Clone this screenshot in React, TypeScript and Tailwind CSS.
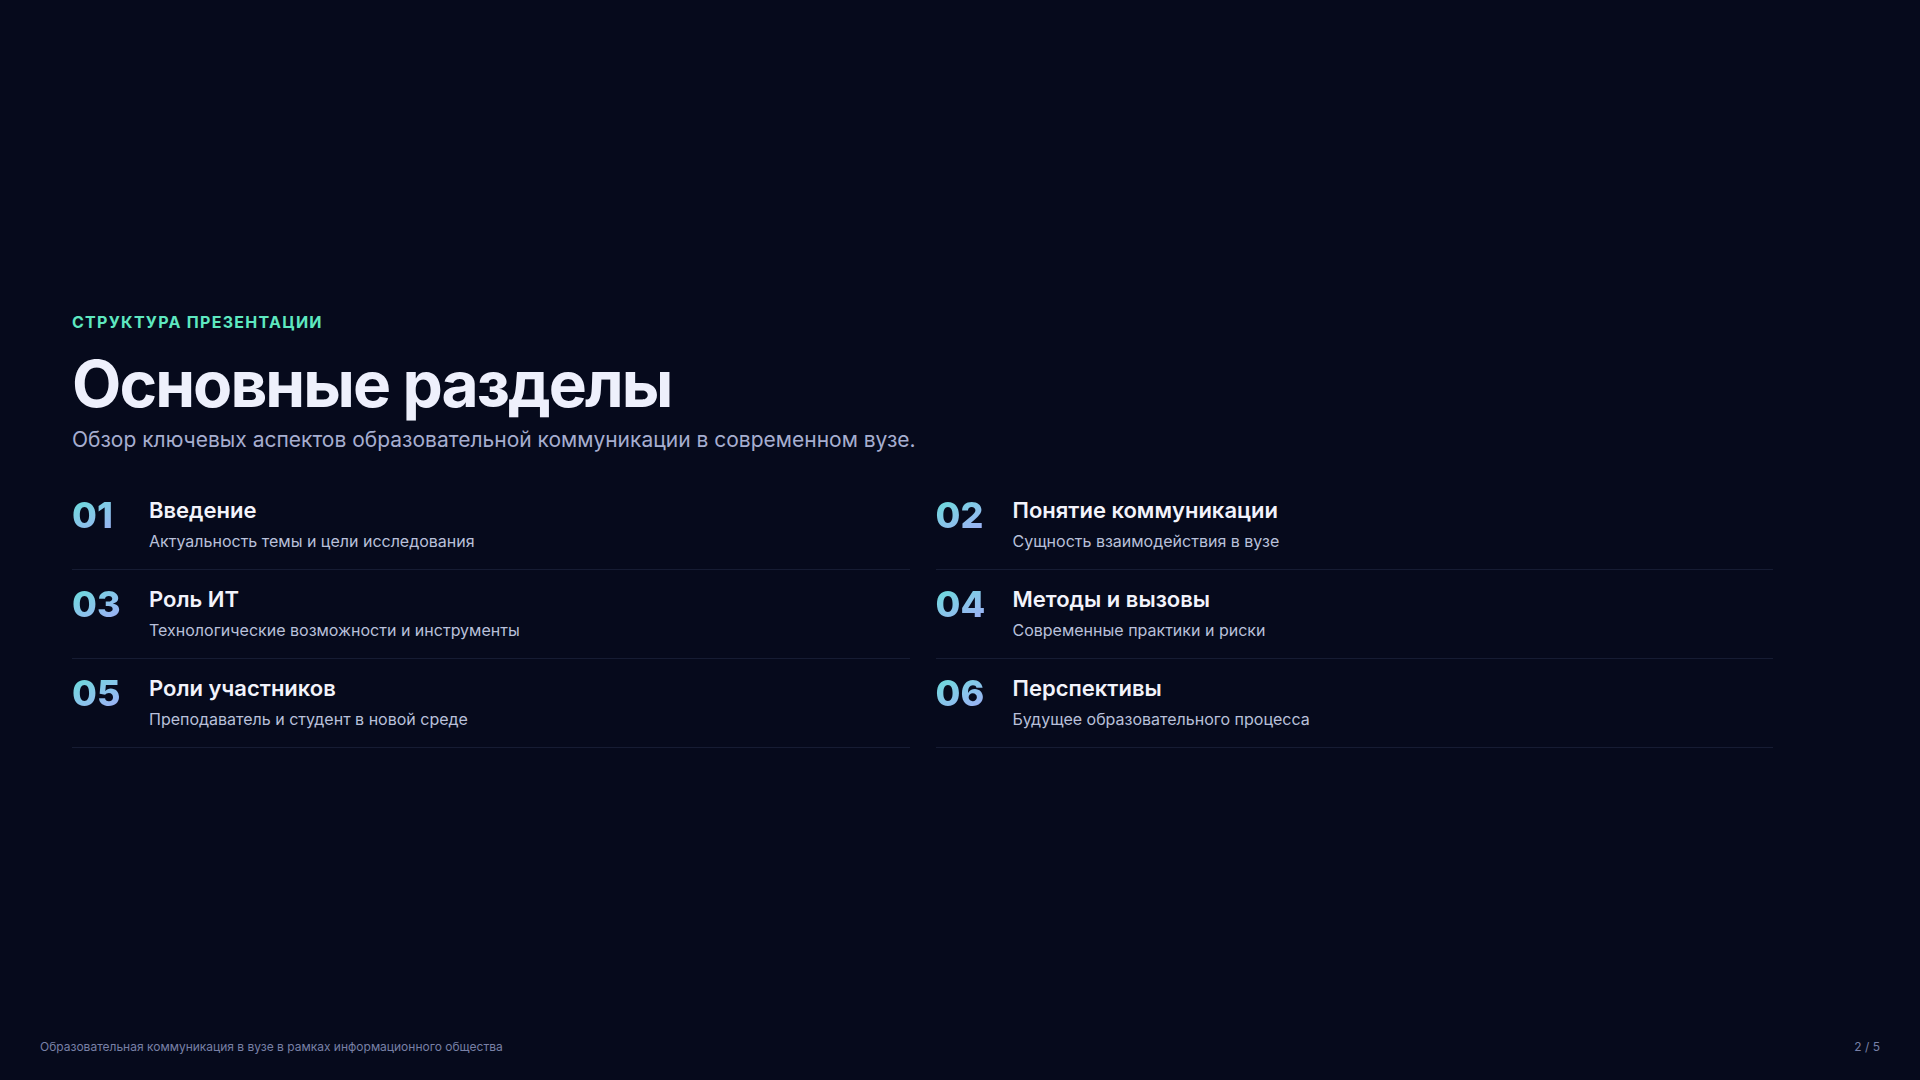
const items = [
  { n: "01", title: "Введение", desc: "Актуальность темы и цели исследования" },
  { n: "02", title: "Понятие коммуникации", desc: "Сущность взаимодействия в вузе" },
  { n: "03", title: "Роль ИТ", desc: "Технологические возможности и инструменты" },
  { n: "04", title: "Методы и вызовы", desc: "Современные практики и риски" },
  { n: "05", title: "Роли участников", desc: "Преподаватель и студент в новой среде" },
  { n: "06", title: "Перспективы", desc: "Будущее образовательного процесса" },
];

export default function App() {
  return (
    <div
      className="h-screen w-full bg-[#060a1c] flex flex-col"
      style={{ fontFamily: "Inter, 'Noto Sans', sans-serif" }}
    >
      <main className="flex-1 flex flex-col justify-center pl-[72px] pr-[147px] pt-[20px]">
        <p className="text-[16px] font-bold tracking-[0.08em] text-[#5ee8c0]">
          СТРУКТУРА ПРЕЗЕНТАЦИИ
        </p>
        <h1 className="mt-[14px] text-[64px] leading-[72px] font-bold tracking-[-0.03em] text-[#eef0fc]">
          Основные разделы
        </h1>
        <p className="mt-[4px] text-[21px] text-[#a6aed0]">
          Обзор ключевых аспектов образовательной коммуникации в современном вузе.
        </p>

        <div className="mt-[26px] grid grid-cols-2 gap-x-[26px]">
          {items.map((it) => (
            <div
              key={it.n}
              className="flex items-start border-b border-[#161c33] pt-[14px] pb-[16px]"
            >
              <span className="w-[77px] shrink-0 text-[36px] leading-[40px] font-extrabold bg-gradient-to-br from-[#5ee0d8] to-[#a99cff] bg-clip-text text-transparent">
                {it.n}
              </span>
              <div>
                <p className="text-[22px] leading-[30px] font-semibold text-[#f2f3fb]">
                  {it.title}
                </p>
                <p className="mt-[4px] text-[16px] leading-[24px] text-[#b9c0da]">
                  {it.desc}
                </p>
              </div>
            </div>
          ))}
        </div>
      </main>

      <footer className="flex justify-between px-[40px] pb-[24px] text-[12px] text-[#7880a6]">
        <span>Образовательная коммуникация в вузе в рамках информационного общества</span>
        <span>2 / 5</span>
      </footer>
    </div>
  );
}
